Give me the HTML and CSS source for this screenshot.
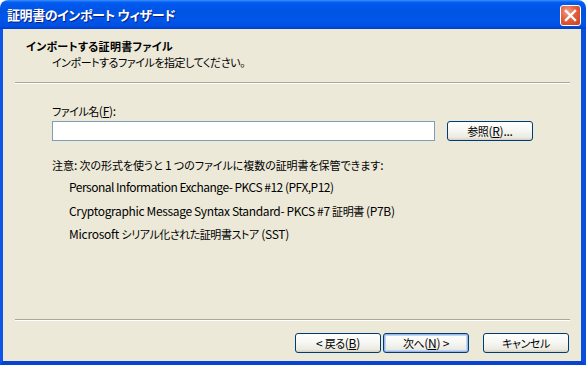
FILE: index.html
```html
<!DOCTYPE html>
<html lang="ja">
<head>
<meta charset="utf-8">
<title>証明書のインポート ウィザード</title>
<link rel="stylesheet" href="styles.css">
</head>
<body>
<div class="window">
  <div class="titlebar">
    <span class="title">証明書のインポート ウィザード</span>
    <div class="close">
      <svg width="13" height="13" viewBox="0 0 13 13"><path d="M2 2 L11 11 M11 2 L2 11" stroke="#fff" stroke-width="2.4" stroke-linecap="square"/></svg>
    </div>
  </div>
  <div class="client">
    <div class="header">
      <div class="h-title"><span class="ja">インポートする証明書ファイル</span></div>
      <div class="h-sub"><span class="ja">インポートするファイルを指定してください。</span></div>
    </div>
    <div class="sep"></div>
    <div class="content">
      <div class="label"><span class="ja">ファイル名</span>(<u>F</u>):</div>
      <div class="file-row">
        <div class="input"></div>
        <div class="btn"><span class="ja">参照</span>(<u>R</u>)...</div>
      </div>
      <div class="note"><span class="ja">注意</span>: <span class="ja">次の形式を使うと</span> 1 <span class="ja">つのファイルに複数の証明書を保管できます</span>:</div>
      <div class="item i1">Personal Information Exchange- PKCS #12 (PFX,P12)</div>
      <div class="item i2">Cryptographic Message Syntax Standard- PKCS #7 <span class="ja">証明書</span> (P7B)</div>
      <div class="item i3">Microsoft <span class="ja">シリアル化された証明書ストア</span> (SST)</div>
    </div>
    <div class="sep"></div>
    <div class="footer">
      <div class="btn">&lt; <span class="ja">戻る</span>(<u>B</u>)</div>
      <div class="btn default"><span class="ja">次へ</span>(<u>N</u>) &gt;</div>
      <div class="btn cancel"><span class="ja">キャンセル</span></div>
    </div>
  </div>
</div>
</body>
</html>
```
FILE: styles.css
```css
html, body {
  margin: 0;
  padding: 0;
  background: #ffffff;
}
body {
  font-family: "Noto Sans CJK JP", "Liberation Sans", sans-serif;
  font-size: 12px;
  font-feature-settings: "palt";
  letter-spacing: -0.25px;
  color: #000;
}
.ja {
  font-size: 11px;
  letter-spacing: -0.45px;
}
.window {
  width: 586px;
  height: 365px;
  display: flex;
  flex-direction: column;
}
.titlebar {
  height: 29px;
  flex: none;
  border-radius: 8px 8px 0 0;
  background: linear-gradient(to bottom, #3d95ff 0px, #0a5ff3 2px, #0058ee 4px, #0054e3 12px, #0055eb 20px, #0050e0 26px, #003dd0 29px);
  display: flex;
  align-items: center;
  justify-content: space-between;
  padding: 0 5px 0 7px;
}
.title {
  color: #fff;
  font-weight: bold;
  font-size: 13px;
  line-height: 16px;
  letter-spacing: -0.4px;
  text-shadow: 1px 1px 0 #0a1e80;
  margin-top: 1px;
}
.close {
  width: 19px;
  height: 19px;
  border: 1px solid #fff;
  border-radius: 3px;
  background: radial-gradient(circle at 35% 30%, #f0a08a 0%, #e35e3c 45%, #c8401f 100%);
  display: flex;
  align-items: center;
  justify-content: center;
  margin-top: 2px;
}
.client {
  flex: 1;
  display: flex;
  flex-direction: column;
  background: #ece9d8;
  border-left: 3px solid #0a56e8;
  border-right: 5px solid #0a4fdc;
  border-bottom: 4px solid #0742d0;
}
.header {
  padding: 10px 0 13px 23px;
}
.h-title {
  font-weight: bold;
  line-height: 14px;
}
.h-title .ja {
  letter-spacing: 0.3px;
}
.h-sub {
  line-height: 14px;
  margin-top: 2px;
  padding-left: 26px;
}
.sep {
  height: 1px;
  border-top: 1px solid #aca899;
  background: #fff;
  margin: 0 11px 0 12px;
}
.content {
  flex: 1;
  padding: 20px 0 0 49px;
}
.label {
  line-height: 14px;
}
.file-row {
  display: flex;
  gap: 12px;
  margin-top: 3px;
}
.input {
  width: 381px;
  height: 18px;
  border: 1px solid #7f9db9;
  background: #fff;
}
.btn {
  width: 84px;
  height: 18px;
  border: 1px solid #003c74;
  border-radius: 3px;
  background: linear-gradient(to bottom, #ffffff 0%, #f6f6f2 50%, #ebeae3 85%, #d6d0c5 100%);
  display: flex;
  align-items: center;
  justify-content: center;
  line-height: 14px;
  box-sizing: content-box;
  white-space: pre;
}
.btn.default {
  box-shadow: inset 0 0 0 1px #98b8ea, inset 0 0 0 2px #c2d4f2;
}
.note {
  line-height: 14px;
  margin-top: 17px;
}
.note .ja {
  letter-spacing: -0.05px;
}
.item {
  line-height: 14px;
  padding-left: 17px;
}
.i1 { margin-top: 8px; letter-spacing: -0.5px; }
.i2 { margin-top: 10px; letter-spacing: -0.35px; }
.i3 { margin-top: 9px; }
.footer {
  display: flex;
  justify-content: flex-end;
  gap: 2px;
  padding: 12px 12px 8px 0;
}
.btn.cancel {
  margin-left: 12px;
}
u {
  text-decoration: underline;
  text-underline-offset: 1px;
}
```
